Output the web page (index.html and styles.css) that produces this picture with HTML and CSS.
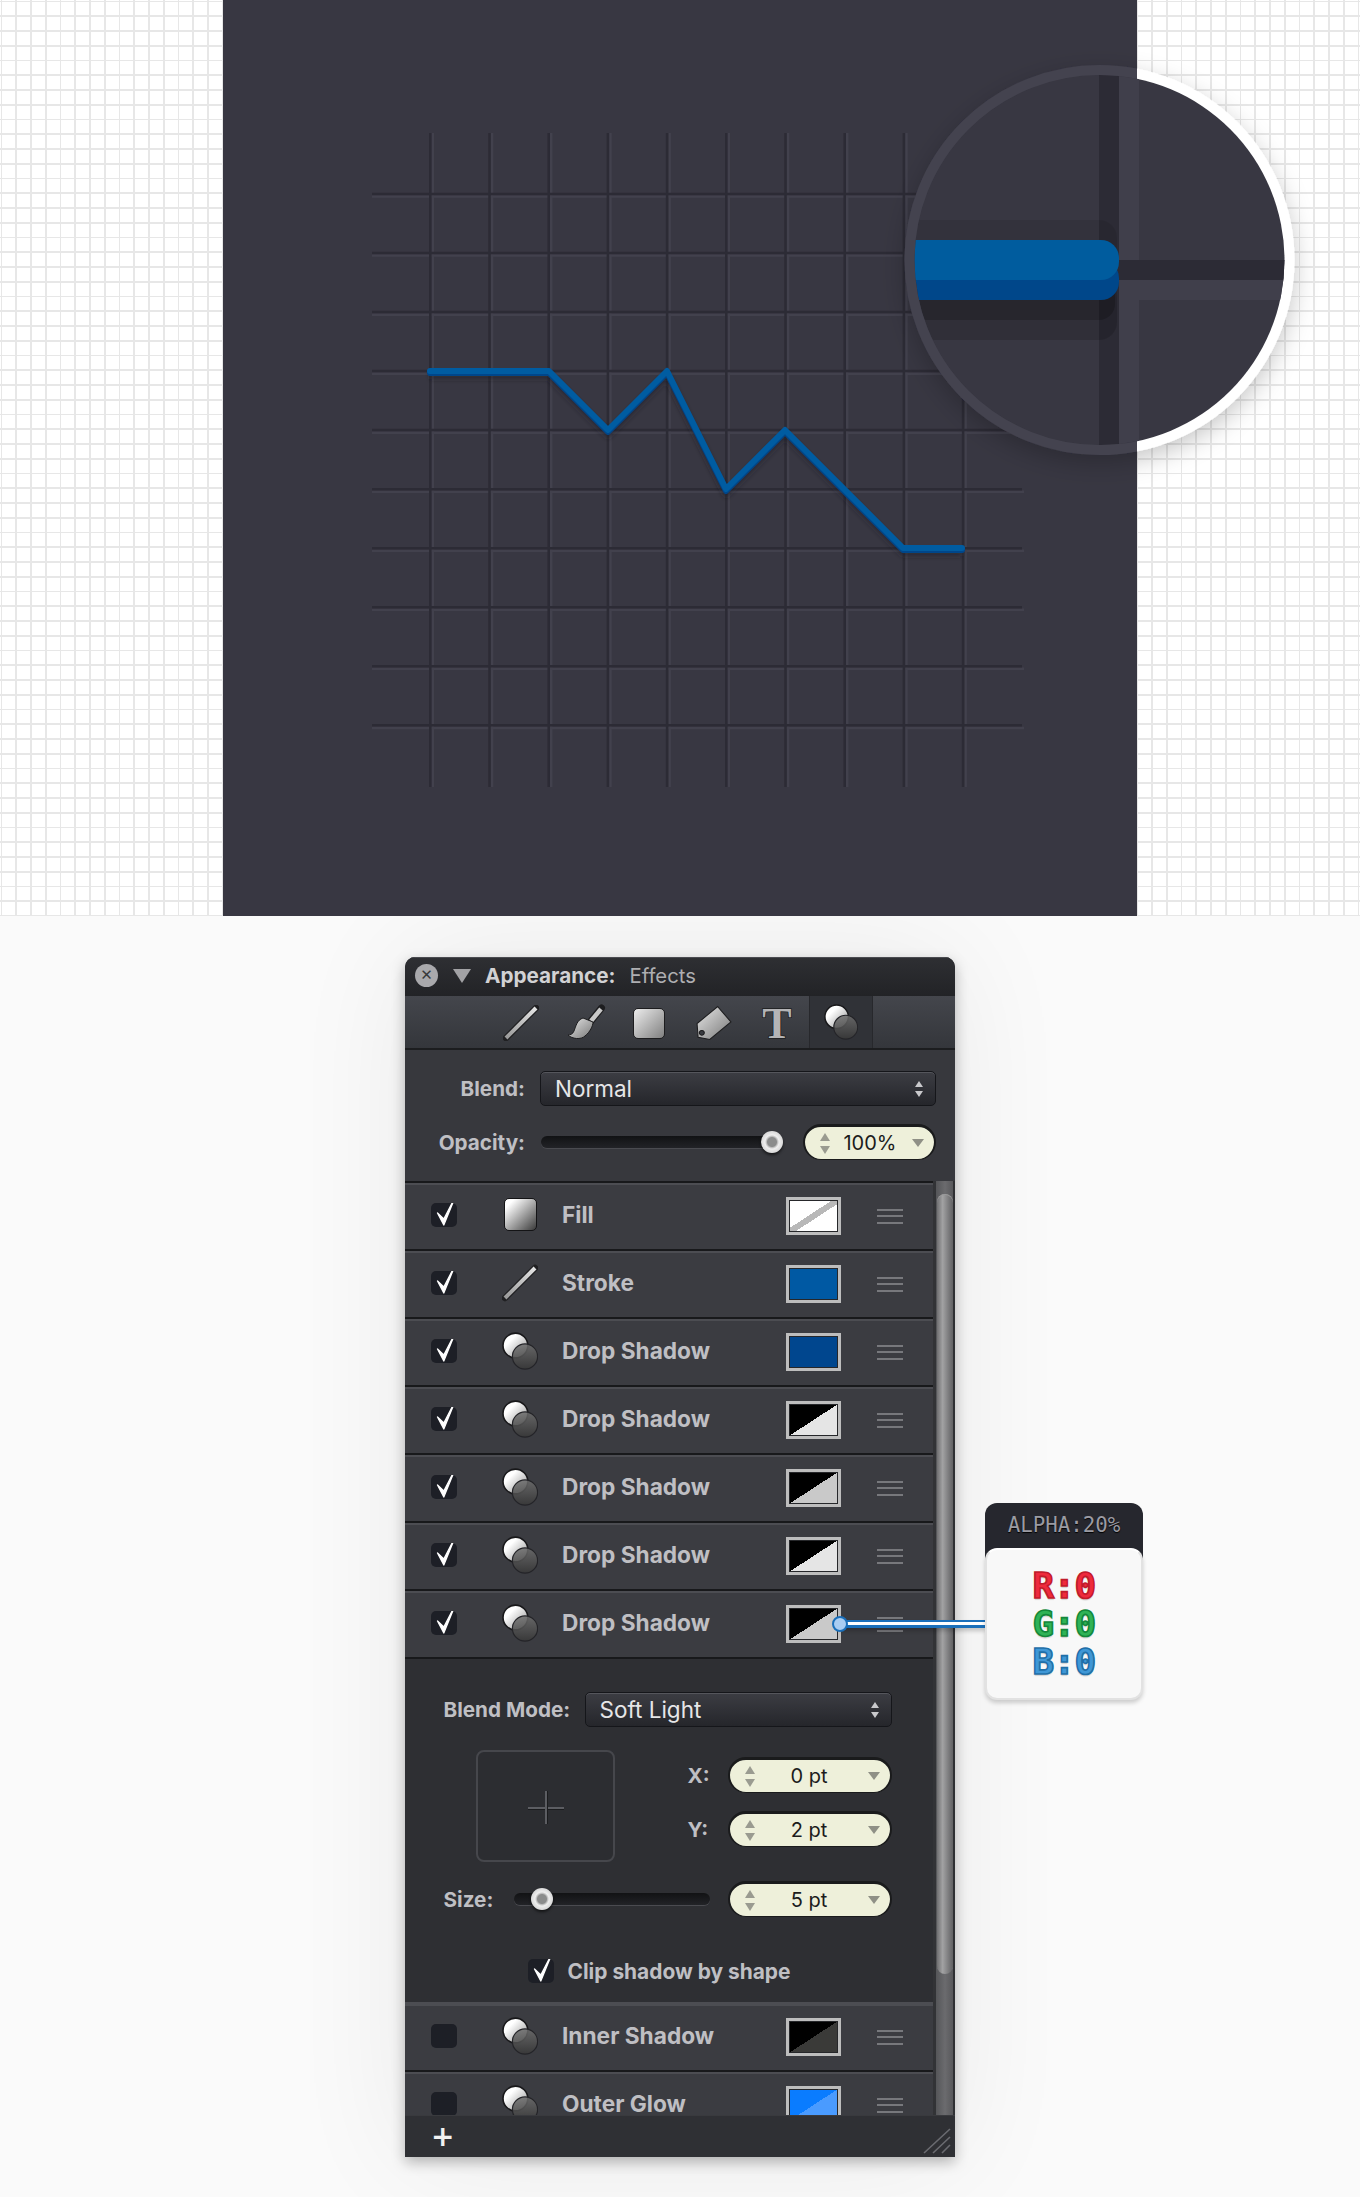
FILE: index.html
```html
<!DOCTYPE html>
<html lang="en">
<head>
<meta charset="utf-8">
<title>Appearance panel</title>
<link rel="stylesheet" href="styles.css">
</head>
<body>
<svg class="defs" aria-hidden="true">
  <defs>
    <linearGradient id="gWhite" x1="0" y1="0" x2="1" y2="1"><stop offset=".3" stop-color="#fff"/><stop offset="1" stop-color="#8a8a8a"/></linearGradient>
    <linearGradient id="gDark" x1="0" y1="0" x2="0" y2="1"><stop offset="0" stop-color="#6e6e6e"/><stop offset="1" stop-color="#383838"/></linearGradient>
    <linearGradient id="gTool" x1="0" y1="0" x2="1" y2="1"><stop offset="0" stop-color="#e8e8e8"/><stop offset="1" stop-color="#777"/></linearGradient>
    <linearGradient id="gLine" gradientUnits="userSpaceOnUse" x1="3" y1="33" x2="33" y2="3"><stop offset="0" stop-color="#999"/><stop offset="1" stop-color="#e4e4e4"/></linearGradient>
    <symbol id="i-shadow" viewBox="0 0 36 38">
      <circle cx="13.4" cy="13.5" r="12.4" fill="url(#gWhite)" stroke="#18181a" stroke-width="1.6"/>
      <circle cx="23" cy="24.5" r="12.6" fill="url(#gDark)" fill-opacity=".86" stroke="#242428" stroke-width="1.2"/>
    </symbol>
    <symbol id="i-check" viewBox="0 0 26 24">
      <path d="M6.500 10 L12.800 22 L24 -5.500 L12.800 16 Z" fill="#fff" stroke="#fff" stroke-width="1.300" stroke-linejoin="round"/>
    </symbol>
    <symbol id="i-line" viewBox="0 0 36 36">
      <path d="M3 33 L33 3" stroke="#202022" stroke-width="6.500" stroke-linecap="round"/>
      <path d="M3 33 L33 3" stroke="url(#gLine)" stroke-width="4"/>
    </symbol>
  </defs>
</svg>

<section class="hero">
  <div class="board"></div>
  <svg class="art" viewBox="0 0 1360 916" aria-hidden="true">
    <defs>
      <clipPath id="cInner"><circle cx="1099.5" cy="260" r="185"/></clipPath>
      <clipPath id="cLeft"><rect x="223" y="0" width="914" height="916"/></clipPath>
      <clipPath id="cRight"><rect x="1137" y="0" width="223" height="916"/></clipPath>
      <filter id="soft" x="-30%" y="-30%" width="160%" height="160%"><feDropShadow dx="0" dy="8" stdDeviation="12" flood-color="#000" flood-opacity=".22"/></filter>
      <filter id="blur2" x="-10%" y="-20%" width="120%" height="140%"><feGaussianBlur stdDeviation="2.5"/></filter>
    </defs>
    <path class="groove-light" d="M432.8 133V787M492 133V787M551.2 133V787M610.4 133V787M669.6 133V787M728.8 133V787M788 133V787M847.2 133V787M906.4 133V787M965.6 133V787M372 196.6H1024M372 255.6H1024M372 314.7H1024M372 373.7H1024M372 432.7H1024M372 491.8H1024M372 550.8H1024M372 609.8H1024M372 668.8H1024M372 727.9H1024"/>
    <path class="groove-dark" d="M430.3 133V787M489.5 133V787M548.7 133V787M607.9 133V787M667.1 133V787M726.3 133V787M785.5 133V787M844.7 133V787M903.9 133V787M963.1 133V787M372 194H1022M372 253H1022M372 312.1H1022M372 371.1H1022M372 430.1H1022M372 489.2H1022M372 548.2H1022M372 607.2H1022M372 666.2H1022M372 725.3H1022"/>
    <path class="chart-shade" filter="url(#blur2)" d="M430 376H549L608 435L667 376L726 494L785 435L903 553H962"/>
    <path class="chart-under" d="M430 373H549L608 432L667 373L726 491L785 432L903 550H962"/>
    <path class="chart-main" d="M430 371H549L608 430L667 371L726 489L785 430L903 548H962"/>

    <g clip-path="url(#cRight)"><circle class="lens-edge" cx="1099.5" cy="260" r="195" filter="url(#soft)"/></g>
    <g clip-path="url(#cLeft)"><circle class="lens-halo" cx="1099.5" cy="260" r="195" filter="url(#soft)"/></g>
    <circle class="lens-face" cx="1099.5" cy="260" r="185"/>
    <g clip-path="url(#cInner)">
      <rect class="z-light" x="1119" y="70" width="20" height="380"/>
      <rect class="z-dark" x="1099" y="70" width="20" height="380"/>
      <rect class="z-dark" x="1119" y="260" width="190" height="20"/>
      <rect class="z-light" x="1119" y="280" width="190" height="20"/>
      <rect class="z-sh3" x="880" y="220" width="237" height="120" rx="18"/>
      <rect class="z-sh2" x="880" y="280" width="237" height="60" rx="18"/>
      <rect class="z-sh1" x="880" y="280" width="235" height="40" rx="16"/>
      <rect class="z-blue2" x="880" y="260" width="239" height="40" rx="18"/>
      <rect class="z-blue1" x="880" y="240" width="239" height="40" rx="18"/>
    </g>
    <g clip-path="url(#cLeft)"><circle class="lens-ring" cx="1099.5" cy="260" r="190"/></g>
  </svg>
</section>

<section class="lower">
  <div class="panel">
    <header class="title">
      <span class="close">✕</span>
      <span class="tri-down"></span>
      <b class="title-main">Appearance:</b>
      <span class="title-sub">Effects</span>
    </header>
    <nav class="toolbar">
      <span class="tool"><svg class="t-ico" viewBox="0 0 36 36"><use href="#i-line"/></svg></span>
      <span class="tool"><svg class="t-ico" viewBox="0 0 36 34"><path d="M24 15 L34.500 2" stroke="#1d1d1f" stroke-width="7" stroke-linecap="round"/><path d="M24 15 L34 3" stroke="#c8c8c8" stroke-width="4.500"/><path d="M16 12 C10 14 9 20 7 25 C6 28 3 29 1 29 C5 33 14 34 18 30 C23 26 26 20 26 16 Z" fill="url(#gTool)" stroke="#1d1d1f" stroke-width="1"/></svg></span>
      <span class="tool"><span class="t-square"></span></span>
      <span class="tool"><svg class="t-ico t-tag" viewBox="0 0 34 33"><path fill-rule="evenodd" d="M20.500 1 L33 15.500 L13 32 L2 30 L1 17 Z M5.500 23.500 a2.300 2.300 0 1 0 .01 0 Z" fill="url(#gTool)" stroke="#1d1d1f" stroke-width="1"/></svg></span>
      <span class="tool"><span class="t-letter">T</span></span>
      <span class="tool tool-on"><svg class="t-ico" viewBox="0 0 36 38"><use href="#i-shadow"/></svg></span>
    </nav>
    <div class="globals">
      <div class="line">
        <span class="lab lab-g">Blend:</span>
        <div class="select sel-g"><span>Normal</span><i class="updown"></i></div>
      </div>
      <div class="line line-op">
        <span class="lab lab-g">Opacity:</span>
        <div class="slider sl-op"><i class="knob knob-end"></i></div>
        <div class="pill pill-op"><i class="updown ud-dim"></i><span class="val">100%</span><i class="tri-small"></i></div>
      </div>
    </div>
    <div class="body">
      <div class="list">
        <div class="row">
          <span class="box"><svg class="chk"><use href="#i-check"/></svg></span>
          <span class="t-slot"><span class="fill-ico"></span></span>
          <span class="name">Fill</span>
          <span class="swatch sw-none"></span><span class="grip"><i></i><i></i><i></i></span>
        </div>
        <div class="row">
          <span class="box"><svg class="chk"><use href="#i-check"/></svg></span>
          <span class="t-slot"><svg class="r-ico"><use href="#i-line"/></svg></span>
          <span class="name">Stroke</span>
          <span class="swatch sw-blue"></span><span class="grip"><i></i><i></i><i></i></span>
        </div>
        <div class="row">
          <span class="box"><svg class="chk"><use href="#i-check"/></svg></span>
          <span class="t-slot"><svg class="r-ico"><use href="#i-shadow"/></svg></span>
          <span class="name">Drop Shadow</span>
          <span class="swatch sw-navy"></span><span class="grip"><i></i><i></i><i></i></span>
        </div>
        <div class="row">
          <span class="box"><svg class="chk"><use href="#i-check"/></svg></span>
          <span class="t-slot"><svg class="r-ico"><use href="#i-shadow"/></svg></span>
          <span class="name">Drop Shadow</span>
          <span class="swatch sw-k1"></span><span class="grip"><i></i><i></i><i></i></span>
        </div>
        <div class="row">
          <span class="box"><svg class="chk"><use href="#i-check"/></svg></span>
          <span class="t-slot"><svg class="r-ico"><use href="#i-shadow"/></svg></span>
          <span class="name">Drop Shadow</span>
          <span class="swatch sw-k2"></span><span class="grip"><i></i><i></i><i></i></span>
        </div>
        <div class="row">
          <span class="box"><svg class="chk"><use href="#i-check"/></svg></span>
          <span class="t-slot"><svg class="r-ico"><use href="#i-shadow"/></svg></span>
          <span class="name">Drop Shadow</span>
          <span class="swatch sw-k1"></span><span class="grip"><i></i><i></i><i></i></span>
        </div>
        <div class="row">
          <span class="box"><svg class="chk"><use href="#i-check"/></svg></span>
          <span class="t-slot"><svg class="r-ico"><use href="#i-shadow"/></svg></span>
          <span class="name">Drop Shadow</span>
          <span class="swatch sw-k2"></span><span class="grip"><i></i><i></i><i></i></span>
        </div>
        <div class="detail">
          <div class="line">
            <span class="lab lab-d">Blend Mode:</span>
            <div class="select sel-d"><span>Soft Light</span><i class="updown"></i></div>
          </div>
          <div class="xy">
            <div class="pad"><i class="cross-h"></i><i class="cross-v"></i></div>
            <div class="xy-fields">
              <div class="line">
                <span class="lab lab-x">X:</span>
                <div class="pill pill-d"><i class="updown ud-dim"></i><span class="val">0 pt</span><i class="tri-small"></i></div>
              </div>
              <div class="line">
                <span class="lab lab-x">Y:</span>
                <div class="pill pill-d"><i class="updown ud-dim"></i><span class="val">2 pt</span><i class="tri-small"></i></div>
              </div>
            </div>
          </div>
          <div class="line line-size">
            <span class="lab lab-s">Size:</span>
            <div class="slider sl-size"><i class="knob knob-start"></i></div>
            <div class="pill pill-d"><i class="updown ud-dim"></i><span class="val">5 pt</span><i class="tri-small"></i></div>
          </div>
          <div class="clip">
            <span class="box"><svg class="chk"><use href="#i-check"/></svg></span>
            <span class="name name-clip">Clip shadow by shape</span>
          </div>
        </div>
        <div class="row row-nosep">
          <span class="box"></span>
          <span class="t-slot"><svg class="r-ico"><use href="#i-shadow"/></svg></span>
          <span class="name">Inner Shadow</span>
          <span class="swatch sw-inner"></span><span class="grip"><i></i><i></i><i></i></span>
        </div>
        <div class="row">
          <span class="box"></span>
          <span class="t-slot"><svg class="r-ico"><use href="#i-shadow"/></svg></span>
          <span class="name">Outer Glow</span>
          <span class="swatch sw-glow"></span><span class="grip"><i></i><i></i><i></i></span>
        </div>
      </div>
      <div class="scroll"><div class="thumb"></div></div>
    </div>
    <footer class="foot">
      <span class="plus">+</span>
      <svg class="resize" viewBox="0 0 28 26"><path d="M1 25 L27 1M10 25 L27 9M19 25 L27 17" stroke="#6a6b70" stroke-width="1.6"/></svg>
    </footer>
  </div>

  <aside class="callout">
    <div class="wire"><i class="wire-dot"></i></div>
    <div class="call-head">ALPHA:20%</div>
    <div class="call-body">
      <span class="ch ch-r">R:0</span>
      <span class="ch ch-g">G:0</span>
      <span class="ch ch-b">B:0</span>
    </div>
  </aside>
</section>
</body>
</html>
```
FILE: styles.css
```css
* { box-sizing: border-box; }
html, body { margin: 0; padding: 0; }
body { width: 1360px; height: 2197px; overflow: hidden; background: #fafafa; font-family: Inter, "Liberation Sans", sans-serif; }
.defs { position: absolute; width: 0; height: 0; }

/* hero */
.hero {
  position: relative; height: 916px; padding-left: 223px; background-color: #fff;
  background-image:
    repeating-linear-gradient(to right, transparent 0 .7px, #e7e7e7 .7px 2.4px, transparent 2.4px 14.75px),
    repeating-linear-gradient(to bottom, transparent 0 .7px, #e7e7e7 .7px 2.4px, transparent 2.4px 14.75px);
}
.board { width: 914px; height: 916px; background: #383742; }
.art { position: absolute; left: 0; top: 0; width: 1360px; height: 916px; }
.groove-dark { fill: none; stroke: #2c2b35; stroke-width: 2.5; }
.groove-light { fill: none; stroke: #42414d; stroke-width: 2.5; }
.chart-shade { fill: none; stroke: #22212a; stroke-width: 6; stroke-opacity: .55; stroke-linejoin: round; }
.chart-under { fill: none; stroke: #00468a; stroke-width: 6; stroke-linecap: round; stroke-linejoin: round; }
.chart-main { fill: none; stroke: #005ca1; stroke-width: 6; stroke-linecap: round; stroke-linejoin: round; }
.lens-edge { fill: #fff; }
.lens-halo { fill: #383742; }
.lens-face { fill: #383742; }
.lens-ring { fill: none; stroke: #44434f; stroke-width: 10; }
.z-dark { fill: #2c2b35; }
.z-light { fill: #403f4b; }
.z-sh3 { fill: #000; fill-opacity: .08; }
.z-sh2 { fill: #000; fill-opacity: .06; }
.z-sh1 { fill: #000; fill-opacity: .19; }
.z-blue1 { fill: #005c9e; }
.z-blue2 { fill: #00478a; }

/* lower */
.lower { display: flex; align-items: flex-start; gap: 30px; height: 1281px; padding: 41px 0 0 405px; }
.panel {
  width: 550px; height: 1200px; display: flex; flex-direction: column; flex: none;
  border-radius: 10px 10px 0 0; overflow: hidden; background: #38393e;
  box-shadow: 0 5px 14px rgba(0,0,0,.28), 0 0 120px rgba(0,0,0,.07);
}
.title {
  height: 39px; display: flex; align-items: center; padding: 0 0 2px 10px;
  background: linear-gradient(#2e2f33, #222326); box-shadow: inset 0 1px #4a4b50;
}
.close {
  width: 23px; height: 23px; border-radius: 50%; background: #a9a9ac; color: #38393c;
  font: 700 15px/23px "DejaVu Sans", sans-serif; text-align: center;
}
.tri-down { width: 0; height: 0; margin-left: 15px; border-style: solid; border-width: 14px 9px 0; border-color: #a2a2a5 transparent transparent; }
.title-main { margin-left: 14px; font-size: 20.7px; font-weight: 700; color: #d2d2d4; }
.title-sub { margin-left: 14px; font-size: 20.3px; color: #aeaeb1; }

.toolbar {
  height: 54px; display: flex; padding: 2px 0 0 84px;
  background: linear-gradient(#44464c, #34363b); border-bottom: 2px solid #1c1d1f;
}
.tool { width: 64px; display: flex; align-items: center; justify-content: center; }
.tool-on { margin-top: -2px; background: #303237; box-shadow: inset 1px 0 #27282c, inset -1px 0 #27282c; }
.t-ico { width: 36px; height: 36px; overflow: visible; }
.t-tag { margin-left: 2px; }
.t-square { width: 32px; height: 31px; border-radius: 5px; border: 1.5px solid #1d1d1f; background: linear-gradient(135deg, #ececec, #808080); }
.t-letter {
  margin-top: 2px;
  font: 700 44px/34px "Liberation Serif", serif; color: #b4b4b6;
  -webkit-text-stroke: 1.5px #1d1d1f; paint-order: stroke fill;
}

.line { display: flex; align-items: center; }
.lab { font-size: 20.7px; font-weight: 700; color: #bfbfc3; white-space: nowrap; flex: none; }
.globals { height: 131px; padding-top: 21px; background: #37383d; }
.lab-g { width: 120px; text-align: right; }
.select {
  height: 35px; display: flex; align-items: center; justify-content: space-between;
  padding: 0 10px 0 14px; border-radius: 5px; border: 1.5px solid #15161a;
  background: linear-gradient(#3c3d43, #25262b); box-shadow: inset 0 1px #55565c;
  color: #e6e6e8; font-size: 22.500px;
}
.sel-g { width: 396px; margin-left: 15px; }
.sel-d { width: 307px; margin-left: 15px; }
.updown { display: flex; flex-direction: column; gap: 4px; width: 12px; }
.updown::before, .updown::after { content: ""; width: 0; height: 0; margin: 0 auto; border-style: solid; border-color: transparent; }
.updown::before { border-width: 0 4px 6px; border-bottom-color: #c9c9cc; }
.updown::after { border-width: 6px 4px 0; border-top-color: #c9c9cc; }
.ud-dim::before { border-width: 0 5px 8px; border-bottom-color: #9a9b90; }
.ud-dim::after { border-width: 8px 5px 0; border-top-color: #9a9b90; }
.ud-dim { gap: 5px; width: 14px; }

.line-op { margin-top: 18px; }
.slider {
  position: relative; height: 12px; border-radius: 6px;
  background: linear-gradient(#111214, #222327); box-shadow: 0 1px #4a4b50;
}
.sl-op { width: 235px; margin-left: 16px; }
.sl-size { width: 196px; margin-left: 15px; }
.knob {
  position: absolute; top: -5px; width: 22px; height: 22px; border-radius: 50%;
  background: radial-gradient(circle, #8b8c8c 0 4.5px, #bdbdbd 5.500px, #eeeeee 7px, #d8d8d8 11px);
  box-shadow: 0 2px 3px rgba(0,0,0,.6);
}
.knob-end { right: -7px; }
.knob-start { left: 17px; }
.pill {
  height: 36px; display: flex; align-items: center; padding: 0 10px 0 13px;
  border-radius: 18px; background: #eef0da;
  border: 2px solid #1a1b1c; border-top-width: 3px; border-bottom-width: 1px;
  color: #1c1c1c; font-size: 20px;
}
.pill-op { width: 133px; margin-left: 27px; }
.pill-d { width: 164px; }
.val { flex: 1; text-align: center; }
.pill-op .val { padding-right: 4px; }
.pill-d .val { padding-left: 2px; padding-right: 8px; }
.tri-small { width: 0; height: 0; border-style: solid; border-width: 8px 6px 0; border-color: #8f9086 transparent transparent; }

.body { height: 934px; display: flex; }
.list { width: 528px; flex: none; }
.scroll {
  width: 22px; height: 934px; padding: 13px 2px 0 4px; flex: none;
  background: linear-gradient(to right, #323336 0 3px, #555659 3px, #6b6b6e 12px, #58585b 20px, #2f3033 20px);
}
.thumb { height: 780px; border-radius: 8px; background: linear-gradient(to right, #6f6f71, #a2a2a3 35%, #747476 80%, #626264); box-shadow: inset 0 1px #9a9a9b; }

.row {
  height: 68px; display: flex; align-items: center; padding: 2px 30px 2px 26px;
  background: #3b3c41; border-top: 2px solid #18191b; box-shadow: inset 0 2px #4c4d52;
}
.row-nosep { border-top-color: #4c4d52; }
.box { width: 26px; height: 24px; margin-top: -2px; border-radius: 5px; background: #1d1f26; flex: none; }
.chk { display: block; width: 26px; height: 24px; overflow: visible; }
.t-slot { width: 36px; height: 38px; margin-left: 45px; margin-top: -3px; display: flex; align-items: center; justify-content: center; flex: none; }
.fill-ico { width: 33px; height: 33px; border-radius: 5px; border: 1.5px solid #141416; background: linear-gradient(135deg, #fff 15%, #3a3a3a); }
.r-ico { width: 36px; height: 38px; overflow: visible; }
.name { flex: 1; margin: -2px 0 0 24px; font-size: 22.7px; line-height: 22px; font-weight: 700; color: #bfbfc3; white-space: nowrap; }
.swatch { width: 55px; height: 38px; flex: none; border: 3px solid #bdbdbd; box-shadow: inset 0 0 0 1px #26272a; }
.sw-none { background: linear-gradient(to bottom right, #fff calc(50% - 3px), #b8b8b8 calc(50% - 3px) calc(50% + 3px), #fff calc(50% + 3px)); }
.sw-blue { background: #0059a3; }
.sw-navy { background: #00468e; }
.sw-k1 { background: linear-gradient(to bottom right, #000 50%, #e5e5e5 50%); }
.sw-k2 { background: linear-gradient(to bottom right, #000 50%, #c9c9c9 50%); }
.sw-inner { background: linear-gradient(to bottom right, #000 50%, #3a3a38 50%); }
.sw-glow { background: linear-gradient(to bottom right, #0a7cff 50%, #4a9bff 50%); }
.grip { width: 26px; margin-left: 36px; display: flex; flex-direction: column; gap: 4.500px; flex: none; }
.grip i { height: 2px; background: #77787c; }

.detail { height: 345px; padding: 33px 0 0 38.5px; background: #2e2f33; border-top: 2px solid #18191b; }
.lab-d { width: 126px; }
.xy { display: flex; margin-top: 23px; margin-left: 32px; }
.pad { position: relative; width: 139px; height: 112px; border: 2px solid #46474c; border-radius: 8px; background: #2c2d31; flex: none; }
.cross-h { position: absolute; left: 50px; top: 55px; width: 36px; height: 2px; background: #5c5d62; box-shadow: 0 1px #1b1c1e; }
.cross-v { position: absolute; left: 67px; top: 39px; width: 2px; height: 33px; background: #5c5d62; box-shadow: 1px 0 #1b1c1e; }
.xy-fields { margin: 7px 0 0 73px; display: flex; flex-direction: column; gap: 18px; }
.lab-x { width: 40px; }
.line-size { margin-top: 19px; }
.lab-s { width: 55px; }
.sl-size + .pill { margin-left: 18px; }
.clip { display: flex; align-items: center; margin: 44px 0 0 84px; }
.name-clip { margin: 0 0 0 14px; flex: none; font-size: 20.9px; }

.foot { position: relative; height: 42px; display: flex; align-items: center; justify-content: space-between; padding: 0 4px 0 26px; background: #2f3034; border-top: 1px solid #393a3e; }
.plus { color: #f1f1f1; font: 700 28px/28px "DejaVu Sans", sans-serif; }
.resize { width: 28px; height: 26px; margin-top: 8px; }

/* callout */
.callout { position: relative; width: 158px; margin-top: 546px; flex: none; }
.wire {
  position: absolute; left: -146px; top: 117px; width: 147px; height: 8px;
  background: linear-gradient(#1a6fba 0 2.5px, #fff 2.5px 5.5px, #1a6fba 5.5px);
  box-shadow: 0 3px 4px rgba(0,0,0,.2);
}
.wire-dot {
  position: absolute; left: -7px; top: -4px; width: 16px; height: 16px; border-radius: 50%;
  background: #a9cdf2; border: 2.5px solid #1a6fba;
}
.call-head {
  height: 57px; padding-top: 9px; border-radius: 12px 12px 0 0; background: #26272e; text-align: center;
  font: 400 20.8px/27px "DejaVu Sans Mono", monospace; color: #9b9ba3; text-shadow: 0 1px 1px #000;
}
.call-body {
  position: relative; height: 152px; margin-top: -12px; border-radius: 12px;
  display: flex; flex-direction: column; align-items: center; justify-content: center;
  background: #f8f8f8; border: 2px solid #e2e2e2; border-top-color: #fff;
  box-shadow: 0 3px 4px rgba(0,0,0,.18);
}
.ch { font: 700 36px/38px "DejaVu Sans Mono", monospace; letter-spacing: -.7px; -webkit-text-stroke: 1.6px; text-shadow: 0 2px 1px rgba(0,0,0,.15); }
.ch-r { color: #ef2a3c; -webkit-text-stroke-color: #c11b2b; }
.ch-g { color: #2fb356; -webkit-text-stroke-color: #13883a; }
.ch-b { color: #3f97d6; -webkit-text-stroke-color: #1f6fa8; }
```
